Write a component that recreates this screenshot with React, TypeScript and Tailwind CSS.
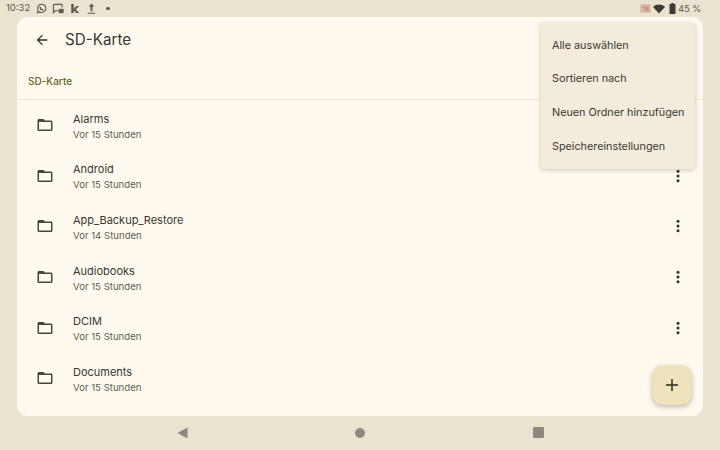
import React from "react";

const rows = [
  ["Alarms", "Vor 15 Stunden"],
  ["Android", "Vor 15 Stunden"],
  ["App_Backup_Restore", "Vor 14 Stunden"],
  ["Audiobooks", "Vor 15 Stunden"],
  ["DCIM", "Vor 15 Stunden"],
  ["Documents", "Vor 15 Stunden"],
];

function Folder() {
  return (
    <svg width="18" height="18" viewBox="0 0 24 24" className="text-[#48463a]" fill="currentColor">
      <path d="M20 6h-8l-2-2H4c-1.100 0-1.990.9-1.990 2L2 18c0 1.100.9 2 2 2h16c1.100 0 2-.9 2-2V8c0-1.100-.9-2-2-2zm0 12H4V8h16v10z" />
    </svg>
  );
}

function Dots() {
  return (
    <svg width="16" height="16" viewBox="0 0 16 16" fill="#33312a">
      <circle cx="8" cy="3.200" r="1.500" />
      <circle cx="8" cy="8" r="1.500" />
      <circle cx="8" cy="12.800" r="1.500" />
    </svg>
  );
}

export default function App() {
  return (
    <div
      className="relative w-[720px] h-[450px] overflow-hidden bg-[#e9e3cf] flex flex-col text-[#3a3830]"
      style={{ fontFamily: "Inter, Roboto, sans-serif" }}
    >
      <div className="h-[17px] shrink-0 flex items-center justify-between pl-[6px] pr-[19px] text-[9.5px] text-[#5c5a4e]">
        <div className="flex items-center gap-[5px]">
          <span className="w-[25px] whitespace-nowrap">10:32</span>
          <svg width="11" height="11" viewBox="0 0 24 24" fill="none" stroke="#5c5a4e" strokeWidth="2.400">
            <path d="M3 21l1.600-5A9 9 0 1 1 8 19.500z" />
            <path d="M9 8c0 4 3 7 7 7" strokeWidth="3" />
          </svg>
          <svg width="12" height="11" viewBox="0 0 24 24" fill="none" stroke="#5c5a4e" strokeWidth="2.400">
            <path d="M14 17H6l-4 4V5a2 2 0 0 1 2-2h15a2 2 0 0 1 2 2v4" />
            <rect x="15" y="14" width="8" height="7" fill="#5c5a4e" />
          </svg>
          <svg width="10" height="11" viewBox="0 0 24 24" fill="#5c5a4e" className="ml-[1px]">
            <path d="M3 1h6v12l6-7h7l-8 8 8 9h-7l-6-7v7H3z" />
          </svg>
          <svg width="11" height="11" viewBox="0 0 24 24" fill="#5c5a4e" className="ml-[1px]">
            <path d="M12 1l6 7h-4v10h-4V8H6zM4 21h16v2.500H4z" />
          </svg>
          <span className="ml-[4px] w-[3.5px] h-[3.5px] rounded-full bg-[#5c5a4e]" />
        </div>
        <div className="flex items-center gap-[3px]">
          <svg width="11" height="11" viewBox="0 0 24 24">
            <rect x="1" y="3" width="22" height="18" fill="#cdb9a2" />
            <path d="M5 8h14v9H12c0-4-3-6-7-6z" fill="#d98f76" />
          </svg>
          <svg width="12" height="10" viewBox="0 0 24 20" fill="#3d3b32" className="ml-[-1px]">
            <path d="M12 19L0 6c7-6.500 17-6.500 24 0z" />
          </svg>
          <svg width="7" height="11" viewBox="0 0 14 22" fill="#3d3b32" className="ml-[1px]">
            <path d="M4.500 0h5v2H13v20H1V2h3.500z" />
          </svg>
          <span className="ml-[-1px] text-[9px] whitespace-nowrap">45 %</span>
        </div>
      </div>

      <div className="mx-[17px] h-[399px] shrink-0 rounded-[11px] bg-[#fff9ef] flex flex-col overflow-hidden">
        <div className="h-[45px] shrink-0 flex items-center pl-[17px] gap-[15px]">
          <svg width="16" height="16" viewBox="0 0 24 24" fill="#33312a">
            <path d="M20 11H7.830l5.590-5.590L12 4l-8 8 8 8 1.410-1.410L7.830 13H20z" />
          </svg>
          <span className="text-[15.2px] pt-[1px]">SD-Karte</span>
        </div>
        <div className="h-[37px] shrink-0 flex items-center pl-[11px] pt-[2px] text-[10px] font-medium text-[#6a6428]">
          SD-Karte
        </div>
        <div className="h-px shrink-0 bg-[#ece7da]" />
        <div className="flex flex-col">
          {rows.map(([name, time]) => (
            <div key={name} className="h-[50.6px] shrink-0 flex items-center pl-[19px] pr-[17px]">
              <Folder />
              <div className="ml-[19px] flex-1 flex flex-col pt-[2px]">
                <span className="text-[11px] leading-[16px]">{name}</span>
                <span className="text-[9.6px] leading-[15px] text-[#5f5d50]">{time}</span>
              </div>
              <Dots />
            </div>
          ))}
        </div>
      </div>

      <div className="flex-1 flex items-center justify-center gap-[167.5px] pb-px">
        <svg width="11" height="12" viewBox="0 0 11 12" fill="#8c8a80">
          <path d="M10.500 0.500v11L0.500 6z" />
        </svg>
        <span className="w-[10px] h-[10px] rounded-full bg-[#8c8a80]" />
        <span className="w-[11px] h-[11px] rounded-[1px] bg-[#8c8a80]" />
      </div>

      <div className="absolute left-[541px] top-[23px] w-[154px] h-[146px] rounded-[3px] bg-[#f3ecdc] shadow-[0_1px_5px_rgba(0,0,0,0.22)] flex flex-col pt-[6px] text-[10.8px]">
        {["Alle auswählen", "Sortieren nach", "Neuen Ordner hinzufügen", "Speichereinstellungen"].map((t) => (
          <div key={t} className="h-[33.7px] flex items-center pl-[11px] whitespace-nowrap">
            {t}
          </div>
        ))}
      </div>

      <div className="absolute left-[652px] top-[365px] w-[40px] h-[40px] rounded-[11px] bg-[#eee2bd] shadow-[0_2px_5px_rgba(0,0,0,0.25)] flex items-center justify-center">
        <svg width="14" height="14" viewBox="0 0 14 14" fill="none" stroke="#2a2615" strokeWidth="1.400">
          <path d="M7 1v12M1 7h12" />
        </svg>
      </div>
    </div>
  );
}
